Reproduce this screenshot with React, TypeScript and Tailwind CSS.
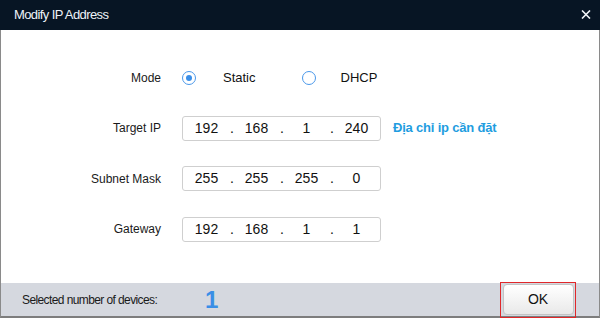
import type { ReactNode } from "react";

const font = { fontFamily: '"Liberation Sans", Arial, sans-serif' };

function Radio({ checked }: { checked?: boolean }) {
  return (
    <span className="flex h-[14px] w-[14px] items-center justify-center rounded-full border border-[#4a98ea] bg-white">
      {checked && <span className="h-[6px] w-[6px] rounded-full bg-[#3a8ee8]" />}
    </span>
  );
}

function IpBox({ parts }: { parts: string[] }) {
  return (
    <div className="flex h-[25px] w-[199px] items-center rounded-[3px] border border-[#cfcfcf] bg-white text-[14px] text-[#111]">
      {parts.map((p, i) => (
        <div key={i} className="flex items-center">
          <span className="w-[47px] text-center">{p}</span>
          {i < parts.length - 1 && <span className="w-[3px] text-center">.</span>}
        </div>
      ))}
    </div>
  );
}

function Row({ label, children }: { label: string; children: ReactNode }) {
  return (
    <div className="flex h-[25px] items-center">
      <div className="w-[160px] text-right text-[12px] text-[#1a1a1a]">{label}</div>
      <div className="ml-[21px] flex items-center">{children}</div>
    </div>
  );
}

export default function App() {
  return (
    <div className="flex h-[318px] w-[600px] flex-col bg-white" style={font}>
      <div className="flex h-[30px] items-center justify-between bg-[#071524] pl-[14px] pr-[9px]">
        <span className="text-[13px] tracking-[-0.6px] text-[#eef3f8]">Modify IP Address</span>
        <svg width="10" height="9" viewBox="0 0 10 9" className="mt-[-1px]">
          <path d="M1 0.5 L9 8.5 M9 0.5 L1 8.5" stroke="#f2f5f8" strokeWidth="1.6" />
        </svg>
      </div>
      <div className="flex flex-1 flex-col gap-[25.5px] border-x border-[#8a8a8a] pt-[35px]">
        <Row label="Mode">
          <Radio checked />
          <span className="ml-[27px] text-[13px] text-[#111]">Static</span>
          <span className="ml-[46px]">
            <Radio />
          </span>
          <span className="ml-[25px] text-[13px] text-[#111]">DHCP</span>
        </Row>
        <Row label="Target IP">
          <IpBox parts={["192", "168", "1", "240"]} />
          <span className="ml-[12px] text-[13px] tracking-[-0.2px] font-bold text-[#1f9de0]">Địa chỉ ip cần đặt</span>
        </Row>
        <Row label="Subnet Mask">
          <IpBox parts={["255", "255", "255", "0"]} />
        </Row>
        <Row label="Gateway">
          <IpBox parts={["192", "168", "1", "1"]} />
        </Row>
      </div>
      <div className="flex h-[35px] items-center border-x border-b-2 border-[#8a8a8a] border-b-[#7d7d7d] bg-[#d5d8df] pl-[21px] pr-[23px]">
        <span className="w-[183px] text-[12px] tracking-[-0.6px] text-[#1a1a1a]">Selected number of devices:</span>
        <span className="text-[24px] font-bold leading-none text-[#3a8ee6]">1</span>
        <div className="ml-auto flex h-[36px] w-[76px] items-center justify-center border border-[#e0282a]">
          <button className="h-[31px] w-[71px] rounded-[4px] border border-[#c4c4c4] bg-gradient-to-b from-white to-[#e9e9e9] text-[14px] text-[#111]">
            OK
          </button>
        </div>
      </div>
    </div>
  );
}
